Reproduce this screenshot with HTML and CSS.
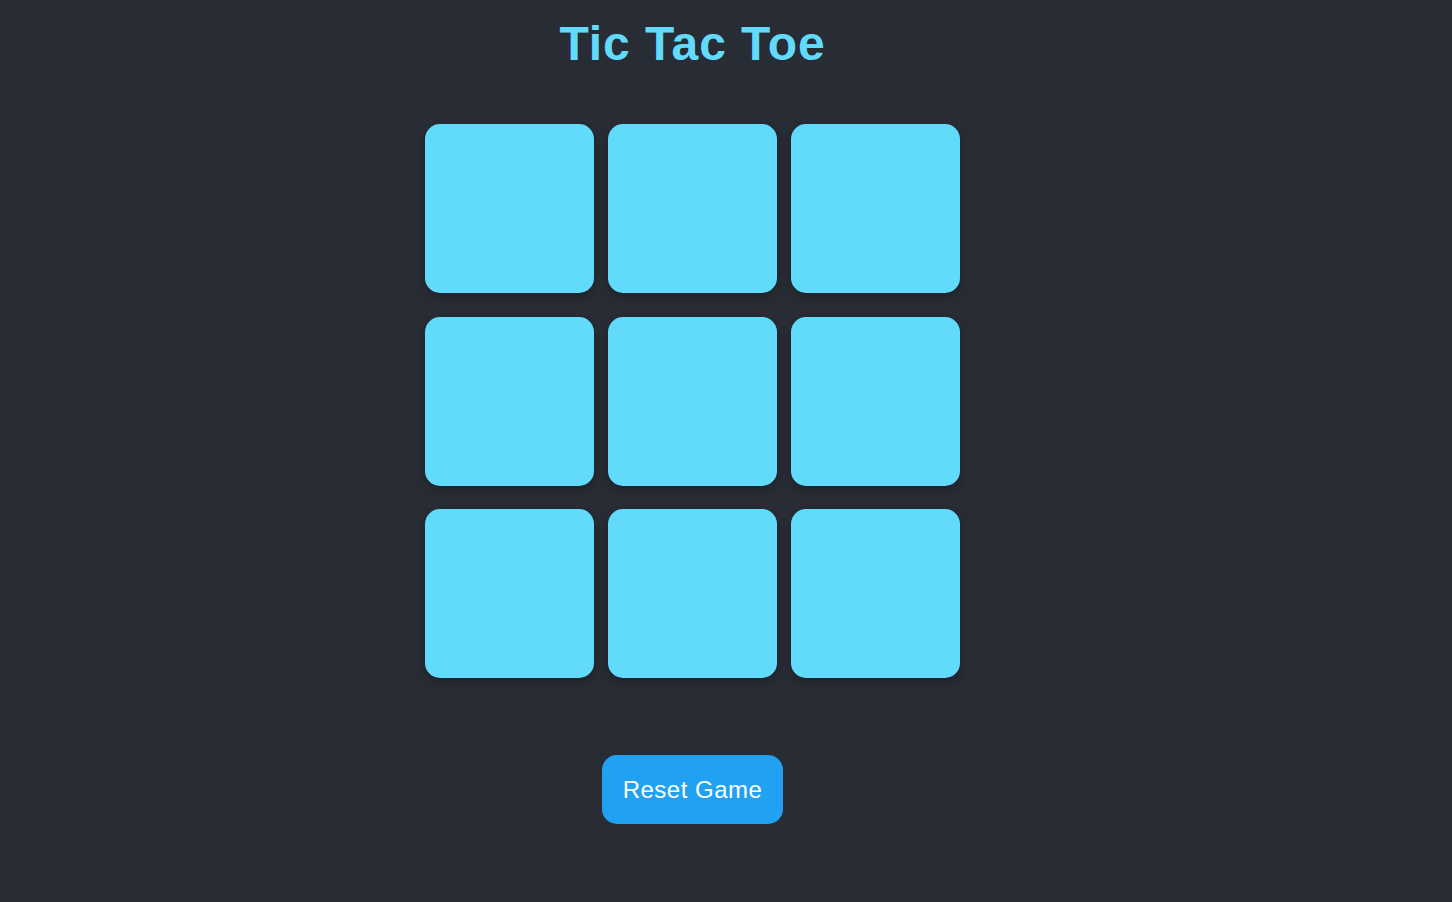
FILE: index.html
```html
<!DOCTYPE html>
<html lang="en">
<head>
<meta charset="utf-8">
<title>Tic Tac Toe</title>
<link rel="stylesheet" href="styles.css">
</head>
<body>
<div class="app">
  <h1 class="title">Tic Tac Toe</h1>
  <div class="board">
    <button class="cell"></button>
    <button class="cell"></button>
    <button class="cell"></button>
    <button class="cell"></button>
    <button class="cell"></button>
    <button class="cell"></button>
    <button class="cell"></button>
    <button class="cell"></button>
    <button class="cell"></button>
  </div>
  <button class="reset">Reset Game</button>
</div>
</body>
</html>
```
FILE: styles.css
```css
html, body {
  margin: 0;
  padding: 0;
  background: #282c34;
  height: 100%;
}
body {
  font-family: "Liberation Sans", Arial, sans-serif;
}
.app {
  width: 1385px;
  display: flex;
  flex-direction: column;
  align-items: center;
  padding-top: 16px;
}
.title {
  margin: 0;
  font-size: 48px;
  line-height: 55px;
  font-weight: bold;
  letter-spacing: 0.9px;
  color: #61dafb;
}
.board {
  margin-top: 53px;
  display: grid;
  grid-template-columns: repeat(3, 169px);
  grid-auto-rows: 169px;
  column-gap: 14px;
  row-gap: 23.5px;
}
.cell {
  border: none;
  padding: 0;
  background: #61dafb;
  border-radius: 15px;
  box-shadow: 0 4px 10px rgba(0, 0, 0, 0.25);
  cursor: pointer;
}
.reset {
  margin-top: 77px;
  width: 181px;
  height: 69px;
  border: none;
  border-radius: 15px;
  background: #21a1f1;
  color: #ffffff;
  font-family: "Liberation Sans", Arial, sans-serif;
  font-size: 24px;
  letter-spacing: 0.5px;
  cursor: pointer;
}
```
